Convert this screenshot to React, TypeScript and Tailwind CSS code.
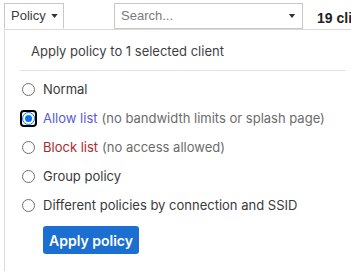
const options = [
  { id: 'normal', label: 'Normal', note: '', tone: 'text-[#3a3a3a]' },
  {
    id: 'allow',
    label: 'Allow list',
    note: '(no bandwidth limits or splash page)',
    tone: 'text-[#5b5bd8]',
  },
  {
    id: 'block',
    label: 'Block list',
    note: '(no access allowed)',
    tone: 'text-[#b0282e]',
  },
  { id: 'group', label: 'Group policy', note: '', tone: 'text-[#3a3a3a]' },
  {
    id: 'ssid',
    label: 'Different policies by connection and SSID',
    note: '',
    tone: 'text-[#3a3a3a]',
  },
]

const Caret = ({ className }: { className?: string }) => (
  <svg viewBox="0 0 8 5" className={className} fill="currentColor">
    <path d="M0 0h8L4 5z" />
  </svg>
)

const Radio = ({ checked }: { checked: boolean }) =>
  checked ? (
    <span className="flex h-[17px] w-[17px] items-center justify-center rounded-[4px] border-2 border-black">
      <span className="flex h-[13px] w-[13px] items-center justify-center rounded-full border-[1.5px] border-[#0a74f0] bg-white">
        <span className="h-[7px] w-[7px] rounded-full bg-[#0a74f0]" />
      </span>
    </span>
  ) : (
    <span className="flex h-[17px] w-[17px] items-center justify-center">
      <span className="h-[13px] w-[13px] rounded-full border border-[#6f6f6f] bg-white" />
    </span>
  )

export default function App() {
  const selected = 'allow'

  return (
    <div className="h-[271px] w-[351px] overflow-hidden bg-white font-['Inter',sans-serif]">
      <div className="flex items-start pl-[4px] pt-[3px] font-['Liberation_Sans',Arial,sans-serif]">
        <button className="relative z-10 -mb-px flex h-[26px] w-[60px] shrink-0 items-center gap-[5px] border border-b-white border-[#c8c8c8] bg-white pl-[6px] text-[13px] text-[#3c3c3c]">
          Policy
          <Caret className="h-[4px] w-[7px] text-[#333]" />
        </button>
        <div className="-mb-px ml-[50px] flex h-[26px] w-[189px] shrink-0 items-center justify-between border border-[#c8c8c8] bg-white pl-[6px] pr-[6px]">
          <span className="text-[13px] text-[#7a7a7a]">Search...</span>
          <Caret className="h-[4px] w-[8px] text-[#333]" />
        </div>
        <span className="ml-[14px] mt-[5px] shrink-0 whitespace-nowrap text-[14px] font-bold text-[#222]">
          19 clients
        </span>
      </div>

      <div className="ml-[4px] h-[300px] w-[400px] border-l border-t border-[#dadada]">
        <div className="flex h-[40px] items-center pl-[26px] pt-[4px] text-[13px] text-[#3f3f3f]">
          Apply policy to 1 selected client
        </div>
        <div className="ml-[15px] h-px w-[326px] bg-[#e4e4e4]" />

        <ul className="pt-[4px]">
          {options.map((o) => (
            <li
              key={o.id}
              className="flex h-[29px] items-center gap-[6px] pl-[15px] text-[13px]"
            >
              <Radio checked={o.id === selected} />
              <span className={o.tone}>{o.label}</span>
              {o.note && (
                <span className="-ml-[2px] text-[#6b6b6b]">{o.note}</span>
              )}
            </li>
          ))}
        </ul>

        <button className="ml-[38px] mt-[6px] h-[28px] w-[96px] rounded-[3px] bg-[#1a6fd0] text-[14px] font-semibold text-white">
          Apply policy
        </button>
      </div>
    </div>
  )
}
